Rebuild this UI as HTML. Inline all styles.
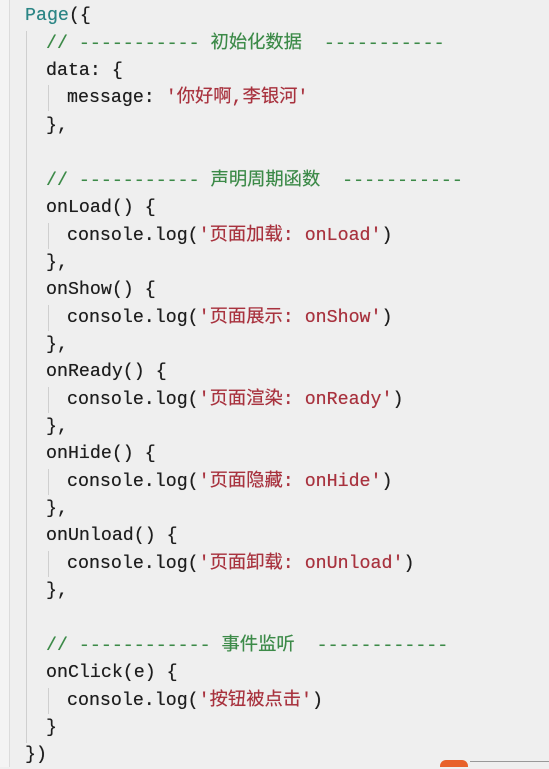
<!DOCTYPE html><html><head><meta charset="utf-8"><style>
body{margin:0;width:549px;height:767px;background:#efefef;overflow:hidden;position:relative;font-family:"Liberation Mono","Noto Sans CJK SC",monospace;font-size:18.3px;color:#1e1e1e}
.l{position:absolute;white-space:pre;height:27px;line-height:27px;text-shadow:0 0 0.4px currentColor}
.c{color:#3c8a48}.s{color:#a8323e}.p{color:#2b8585}
.g{position:absolute;width:1px;background:#cfcfcf}
</style></head><body>
<div style="position:absolute;left:0;top:0;width:9px;height:767px;background:#f4f4f4;border-right:1px solid #dcdcdc"></div>
<div class="g" style="left:26px;top:31px;height:712px"></div>
<div class="g" style="left:48px;top:85px;height:26px"></div>
<div class="g" style="left:48px;top:223px;height:26px"></div>
<div class="g" style="left:48px;top:305px;height:26px"></div>
<div class="g" style="left:48px;top:387px;height:26px"></div>
<div class="g" style="left:48px;top:469px;height:26px"></div>
<div class="g" style="left:48px;top:551px;height:26px"></div>
<div class="g" style="left:48px;top:688px;height:26px"></div>
<div class="l p" style="left:25px;top:3px">Page<span style="color:#1e1e1e">({</span></div>
<div class="l c" style="left:46px;top:31px">// ----------- 初始化数据  -----------</div>
<div class="l" style="left:46px;top:58px">data: {</div>
<div class="l" style="left:67px;top:85px">message: <span class="s">'你好啊,李银河'</span></div>
<div class="l" style="left:46px;top:113px">},</div>
<div class="l c" style="left:46px;top:168px">// ----------- 声明周期函数  -----------</div>
<div class="l" style="left:46px;top:195px">onLoad() {</div>
<div class="l" style="left:67px;top:223px">console.log(<span class="s">'页面加载: onLoad'</span>)</div>
<div class="l" style="left:46px;top:250px">},</div>
<div class="l" style="left:46px;top:277px">onShow() {</div>
<div class="l" style="left:67px;top:305px">console.log(<span class="s">'页面展示: onShow'</span>)</div>
<div class="l" style="left:46px;top:332px">},</div>
<div class="l" style="left:46px;top:359px">onReady() {</div>
<div class="l" style="left:67px;top:387px">console.log(<span class="s">'页面渲染: onReady'</span>)</div>
<div class="l" style="left:46px;top:414px">},</div>
<div class="l" style="left:46px;top:441px">onHide() {</div>
<div class="l" style="left:67px;top:469px">console.log(<span class="s">'页面隐藏: onHide'</span>)</div>
<div class="l" style="left:46px;top:496px">},</div>
<div class="l" style="left:46px;top:523px">onUnload() {</div>
<div class="l" style="left:67px;top:551px">console.log(<span class="s">'页面卸载: onUnload'</span>)</div>
<div class="l" style="left:46px;top:578px">},</div>
<div class="l c" style="left:46px;top:633px">// ------------ 事件监听  ------------</div>
<div class="l" style="left:46px;top:660px">onClick(e) {</div>
<div class="l" style="left:67px;top:688px">console.log(<span class="s">'按钮被点击'</span>)</div>
<div class="l" style="left:46px;top:715px">}</div>
<div class="l" style="left:25px;top:742px">})</div>
<div style="position:absolute;left:470px;top:761px;width:79px;height:1px;background:#999"></div>
<div style="position:absolute;left:440px;top:760px;width:28px;height:7px;background:#e8612a;border-radius:6px 6px 0 0"></div>
</body></html>
